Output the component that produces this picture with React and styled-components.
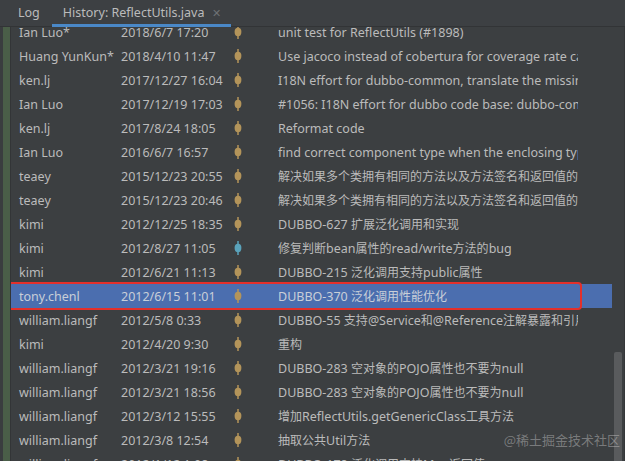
import React from "react";
import styled, { createGlobalStyle } from "styled-components";

const GlobalStyle = createGlobalStyle`
  html, body {
    margin: 0;
    padding: 0;
    background: #3c3f41;
  }
  body {
    font-family: "Noto Sans", "Noto Sans CJK SC", sans-serif;
    color: #bbbbbb;
  }
`;

const commits = [
  { author: "Ian Luo*", date: "2018/6/7 17:20", msg: "unit test for ReflectUtils (#1898)" },
  { author: "Huang YunKun*", date: "2018/4/10 11:47", msg: "Use jacoco instead of cobertura for coverage rate calculation" },
  { author: "ken.lj", date: "2017/12/27 16:04", msg: "I18N effort for dubbo-common, translate the missing comments" },
  { author: "Ian Luo", date: "2017/12/19 17:03", msg: "#1056: I18N effort for dubbo code base: dubbo-common" },
  { author: "ken.lj", date: "2017/8/24 18:05", msg: "Reformat code" },
  { author: "Ian Luo", date: "2016/6/7 16:57", msg: "find correct component type when the enclosing type is array" },
  { author: "teaey", date: "2015/12/23 20:55", msg: "解决如果多个类拥有相同的方法以及方法签名和返回值的问题" },
  { author: "teaey", date: "2015/12/23 20:46", msg: "解决如果多个类拥有相同的方法以及方法签名和返回值的问题" },
  { author: "kimi", date: "2012/12/25 18:35", msg: "DUBBO-627 扩展泛化调用和实现" },
  { author: "kimi", date: "2012/8/27 11:05", msg: "修复判断bean属性的read/write方法的bug", blue: true },
  { author: "kimi", date: "2012/6/21 11:13", msg: "DUBBO-215 泛化调用支持public属性" },
  { author: "tony.chenl", date: "2012/6/15 11:01", msg: "DUBBO-370 泛化调用性能优化", selected: true },
  { author: "william.liangf", date: "2012/5/8 0:33", msg: "DUBBO-55 支持@Service和@Reference注解暴露和引用服务" },
  { author: "kimi", date: "2012/4/20 9:30", msg: "重构" },
  { author: "william.liangf", date: "2012/3/21 19:16", msg: "DUBBO-283 空对象的POJO属性也不要为null" },
  { author: "william.liangf", date: "2012/3/21 18:56", msg: "DUBBO-283 空对象的POJO属性也不要为null" },
  { author: "william.liangf", date: "2012/3/12 15:55", msg: "增加ReflectUtils.getGenericClass工具方法" },
  { author: "william.liangf", date: "2012/3/8 12:54", msg: "抽取公共Util方法" },
  { author: "william.liangf", date: "2012/1/12 1:08", msg: "DUBBO-178 泛化调用支持Map返回值" },
];

// split a message into latin / cjk runs (cjk glyphs are set a bit smaller)
const splitRuns = (text) => text.match(/[\u3000-\u9fff\uff00-\uffef]+|[^\u3000-\u9fff\uff00-\uffef]+/g) || [];
const isCjk = (s) => /[\u3000-\u9fff\uff00-\uffef]/.test(s);

const Page = styled.div`
  position: relative;
  width: 625px;
  height: 461px;
  overflow: hidden;
  display: flex;
  flex-direction: column;
`;

// tabs
const TabBar = styled.div`
  height: 26px;
  flex: none;
  display: flex;
  align-items: stretch;
  background: #3d4043;
  border-bottom: 1px solid #323436;
  padding-left: 6px;
  position: relative;
  z-index: 2;
`;

const Tab = styled.div`
  display: flex;
  align-items: center;
  gap: 8px;
  padding: 0 ${(p) => (p.active ? "10px 0 11px" : "12px")};
  font-size: 12.5px;
  color: #bbbbbb;
  border-bottom: ${(p) => (p.active ? "3px solid #4a88c7" : "3px solid transparent")};
  margin-bottom: -1px;
  box-sizing: border-box;
  padding-top: 1px;
`;

const Close = styled.span`
  font-size: 11px;
  color: #6e7174;
`;

// body
const Body = styled.div`
  flex: 1;
  display: flex;
  min-height: 0;
`;

const Gutter = styled.div`
  width: 7px;
  flex: none;
  background: #4a5e48;
  border-left: 3px solid #3a3d3f;
  border-right: 1px solid #333537;
`;

const List = styled.div`
  flex: 1;
  overflow: hidden;
`;

const Rows = styled.div`
  margin-top: -7px;
`;

const Row = styled.div`
  position: relative;
  height: 24px;
  display: flex;
  align-items: center;
  font-size: 12.5px;
  white-space: nowrap;
  background: ${(p) => (p.selected ? "#4b6eaf" : "transparent")};
  color: ${(p) => (p.selected ? "#c9cfd8" : "#bbbbbb")};

  ${(p) =>
    p.selected &&
    `
    &::after {
      content: "";
      position: absolute;
      left: -3px;
      top: -2px;
      width: 574px;
      height: 28px;
      box-sizing: border-box;
      border: 2px solid #e3302b;
      border-radius: 4px;
    }
  `}
`;

const Author = styled.div`
  width: 102px;
  padding-left: 8px;
  flex: none;
  overflow: hidden;
`;

const DateCell = styled.div`
  width: 100px;
  flex: none;
`;

const Graph = styled.div`
  width: 57px;
  height: 24px;
  flex: none;
  display: flex;
  padding-left: 11px;
  box-sizing: border-box;
`;

const Message = styled.div`
  width: 300px;
  flex: none;
  overflow: hidden;
`;

const Cjk = styled.span`
  font-size: 12px;
`;

const ScrollTrack = styled.div`
  width: 13px;
  flex: none;
  display: flex;
  flex-direction: column;
  align-items: center;
  padding-top: 325px;
  box-sizing: border-box;
  border-right: 1px solid #353739;
`;

const Thumb = styled.div`
  width: 8px;
  flex: 1;
  background: #595b5d;
  border-radius: 2px 2px 0 0;
`;

const Watermark = styled.div`
  position: absolute;
  right: 5px;
  bottom: 12px;
  font-size: 13px;
  color: rgba(200, 200, 200, 0.45);
  font-family: "Noto Sans CJK SC", sans-serif;
  z-index: 3;
`;

function Node({ blue }) {
  const c = blue ? "#5aa3bb" : "#b3945a";
  return (
    <svg width="12" height="24" viewBox="0 0 12 24">
      <line x1="6" y1="5" x2="6" y2="19" stroke={c} strokeWidth="1.5" />
      <ellipse cx="6" cy="12" rx="3.4" ry="4.2" fill={c} />
    </svg>
  );
}

export default function App() {
  return (
    <Page>
      <GlobalStyle />
      <TabBar>
        <Tab>Log</Tab>
        <Tab active>
          History: ReflectUtils.java
          <Close>✕</Close>
        </Tab>
      </TabBar>
      <Body>
        <Gutter />
        <List>
          <Rows>
            {commits.map((c, i) => (
              <Row key={i} selected={c.selected}>
                <Author>{c.author}</Author>
                <DateCell>{c.date}</DateCell>
                <Graph>
                  <Node blue={c.blue} />
                </Graph>
                <Message>
                  {splitRuns(c.msg).map((run, j) =>
                    isCjk(run) ? <Cjk key={j}>{run}</Cjk> : <span key={j}>{run}</span>
                  )}
                </Message>
              </Row>
            ))}
          </Rows>
        </List>
        <ScrollTrack>
          <Thumb />
        </ScrollTrack>
      </Body>
      <Watermark>@稀土掘金技术社区</Watermark>
    </Page>
  );
}
